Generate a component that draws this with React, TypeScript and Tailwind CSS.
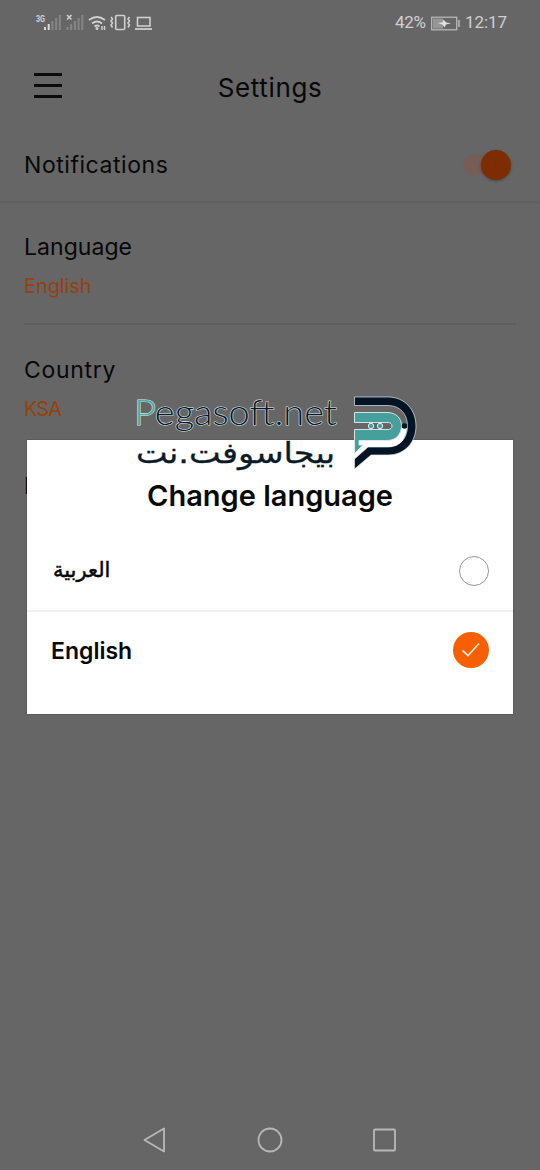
import type { ReactNode } from "react";
import clsx from "clsx";

const SETTINGS = [
  { label: "Language", value: "English", tracking: "tracking-[0.05px]", valueTracking: "tracking-[-0.1px]", box: "h-[122px] border-b-2 border-[#5e5e5e] pt-[26px]" },
  { label: "Country", value: "KSA", tracking: "tracking-[0.7px]", valueTracking: "tracking-[-0.9px]", box: "h-[122px] pt-[27px]" },
];

function SignalBars({ active }: { active: number }) {
  return (
    <>
      {[3, 6, 9, 12, 15].map((h, i) => (
        <rect key={h} x={i * 3.7} y={15 - h} width="2" height={h} fill={i < active ? "#dcdcdc" : "#858585"} />
      ))}
    </>
  );
}

function StatusBar() {
  return (
    <header className="flex h-[46px] shrink-0 items-center justify-between pl-[35px] pr-[33px] text-[#cfcfcf]">
      <svg width="120" height="24" viewBox="35 11 120 24" fill="none" stroke="#cfcfcf">
        <text x="36" y="22" fontSize="9" fontWeight="700" fill="#d4d4d4" stroke="none" className="font-['Roboto',sans-serif]" textLength="9" lengthAdjust="spacingAndGlyphs">3G</text>
        <g transform="translate(44 15)" stroke="none"><SignalBars active={2} /></g>
        <path d="M67 15l4.5 4.5M71.500 15l-4.500 4.500" strokeWidth="1.6" />
        <g transform="translate(66.500 15)" stroke="none"><SignalBars active={0} /></g>
        <path d="M89 20q8-6 16 0M92 23.500q5-4 10 0M94.500 26.500q2.500-2 5 0" strokeWidth="1.8" />
        <circle cx="97" cy="28.500" r="1.500" fill="#cfcfcf" stroke="none" />
        <path d="M102 26v4M104.500 26v4" strokeWidth="1.500" />
        <rect x="115.700" y="15.500" width="9" height="14" rx="1" strokeWidth="1.600" />
        <path d="M111 17l1.500 2-1.500 2 1.500 2-1.500 2 1.500 2.500M129.500 17l-1.500 2 1.500 2-1.500 2 1.500 2-1.500 2.500" strokeWidth="1.600" />
        <rect x="137.500" y="17.500" width="12.500" height="8.500" strokeWidth="1.600" />
        <path d="M135 29h17" strokeWidth="1.800" />
      </svg>
      <div className="flex items-center font-['Roboto',sans-serif] text-[17px]">
        <span className="w-[36px] tracking-[-0.3px]">42%</span>
        <svg width="29" height="15" viewBox="0 0 29 15" fill="none" stroke="#bdbdbd">
          <rect x="0.700" y="1.200" width="25" height="12.600" strokeWidth="1.200" />
          <rect x="2" y="2.500" width="10" height="10" fill="#969696" stroke="none" />
          <path d="M6.500 7l5-.5 1-3 2.500 3 5 .7-5 1.300-1.500 3-2-3z" fill="#e2e2e2" stroke="none" />
          <path d="M28 4v7" strokeWidth="1.500" />
        </svg>
        <span className="ml-[5px] w-[42px] whitespace-nowrap tracking-[-0.1px]">12:17</span>
      </div>
    </header>
  );
}

function Toggle() {
  return (
    <div className="mr-[5px] flex h-[30px] w-[48px] items-center rounded-full">
      <div className="h-5 w-[33px] shrink-0 rounded-full bg-[#765e56]" />
      <div className="-ml-[15px] size-[30px] shrink-0 rounded-full bg-[#7e2d00] shadow-[0_1px_3px_rgba(0,0,0,0.35)]" />
    </div>
  );
}

function Option({ selected, children, className }: { selected?: boolean; children: ReactNode; className?: string }) {
  return (
    <button className={clsx("flex w-full items-center justify-between text-left text-[#080808]", className)}>
      {children}
      {selected ? (
        <span className="grid size-[36px] place-items-center rounded-full bg-[#f75f04]">
          <svg width="20" height="18" viewBox="0 0 20 18" fill="none" stroke="#ffe6cf" strokeWidth="1.800">
            <path d="M1.500 9.500l5.500 5L18 2.500" />
          </svg>
        </span>
      ) : (
        <span className="size-[30px] rounded-full border-[1.500px] border-[#969696]" />
      )}
    </button>
  );
}

function Watermark() {
  return (
    <svg className="pointer-events-none absolute left-[130px] top-[390px]" width="292" height="84" viewBox="130 390 292 84">
      <text x="134" y="425" fontSize="35" fill="#07192a" stroke="#dcebef" strokeWidth="1.100" paintOrder="stroke" textLength="203" lengthAdjust="spacingAndGlyphs" className="font-['Lato',sans-serif] font-light">
        <tspan fill="#48aaa9">P</tspan>egasoft.net
      </text>
      <text x="136" y="463" fontSize="29" fill="#0b1b2a" stroke="#0b1b2a" strokeWidth=".3" direction="rtl" textAnchor="end" textLength="199" lengthAdjust="spacingAndGlyphs" className="font-['DejaVu_Sans',sans-serif]">بيجاسوفت.نت</text>
      {/* speech bubble mark */}
      <path d="M354.500 397H388C405 397 416 410 416 426S405 455 388 455H371L354.500 469V459L368 447H388C400 447 407.500 438 407.500 426S400 405.500 388 405.500H354.500Z" fill="#031426" stroke="#dce7ea" strokeWidth=".7" />
      <path d="M359 440.500H387C396 440.500 401.500 434 401.500 426L407 426C407 438 400 447 388 447H359Z" fill="#fff" />
      <path d="M354.500 412.500H387C396 412.500 401.500 418 401.500 426S396 440.500 387 440.500H359V445H363L354.500 453.500V429.500H388C390.500 429.500 392 428 392 426S390.500 422.500 388 422.500H354.500Z" fill="#45a09d" stroke="#e4eeee" strokeWidth=".9" />
      <g fill="#45a09d" stroke="#e4eeee">
        <circle cx="371" cy="426" r="2.700" />
        <circle cx="380" cy="426" r="2.700" />
      </g>
      <circle cx="404.500" cy="426" r="2.800" fill="#031426" />
    </svg>
  );
}

export default function App() {
  return (
    <div className="relative flex h-[1170px] w-[540px] flex-col overflow-hidden bg-[#666666] font-['Inter',sans-serif] text-[#080808]">
      <StatusBar />
      <div className="grid h-[82px] shrink-0 grid-cols-[1fr_auto_1fr] items-center">
        <div className="-mt-[3px] ml-[34px] flex w-[28px] flex-col gap-[8px]">
          <i className="h-[3px] bg-[#0b0b0b]" />
          <i className="h-[3px] bg-[#0b0b0b]" />
          <i className="h-[3px] bg-[#0b0b0b]" />
        </div>
        <h1 className="text-[26px] tracking-[0.65px]">Settings</h1>
        <span />
      </div>
      <div className="flex h-[75px] shrink-0 items-center justify-between border-b-2 border-[#5f5f5f] pl-[24px] pr-[24px]">
        <span className="pt-[2px] text-[23px] tracking-[0.55px]">Notifications</span>
        <Toggle />
      </div>
      <main className="flex flex-col px-[24px]">
        {SETTINGS.map((s) => (
          <section key={s.label} className={clsx("flex flex-col", s.box)}>
            <h2 className={clsx("text-[23px] leading-[36px]", s.tracking)}>{s.label}</h2>
            <p className={clsx("mt-[7px] text-[20px] leading-[28px] text-[#96410f]", s.valueTracking)}>{s.value}</p>
          </section>
        ))}
        <h2 className="pt-[21px] text-[23px] font-medium leading-[36px]">L</h2>
      </main>

      <div className="absolute left-[27px] top-[440px] flex h-[274px] w-[486px] flex-col bg-white shadow-[0_0_1px_#333]">
        <h2 className="pt-[36px] text-center text-[29px] font-semibold leading-[40px]">Change language</h2>
        <Option className="mt-[13px] h-[83px] border-b-2 border-[#f1f1f1] pl-[26px] pr-[24px] pt-[3px]">
          <span dir="rtl" className="font-['DejaVu_Sans',sans-serif] text-[21px] [-webkit-text-stroke:0.5px_#080808]">العربية</span>
        </Option>
        <Option selected className="h-[76px] pl-[24px] pr-[24px]">
          <span className="pt-[2px] text-[23px] font-semibold">English</span>
        </Option>
      </div>
      <Watermark />

      <nav className="mt-auto flex h-[60px] shrink-0 items-center justify-center gap-[89px]">
        <svg width="26" height="28" viewBox="0 0 26 28" fill="none" stroke="#b8b8b8" strokeWidth="1.800" strokeLinejoin="round"><path d="M2.500 14L22 2.500v23z" /></svg>
        <svg width="26" height="28" viewBox="0 0 26 28" fill="none" stroke="#b8b8b8" strokeWidth="1.800"><circle cx="13" cy="14" r="11.500" /></svg>
        <svg width="26" height="28" viewBox="0 0 26 28" fill="none" stroke="#b8b8b8" strokeWidth="1.800"><rect x="2" y="3.500" width="21" height="21" rx="1" /></svg>
      </nav>
    </div>
  );
}
